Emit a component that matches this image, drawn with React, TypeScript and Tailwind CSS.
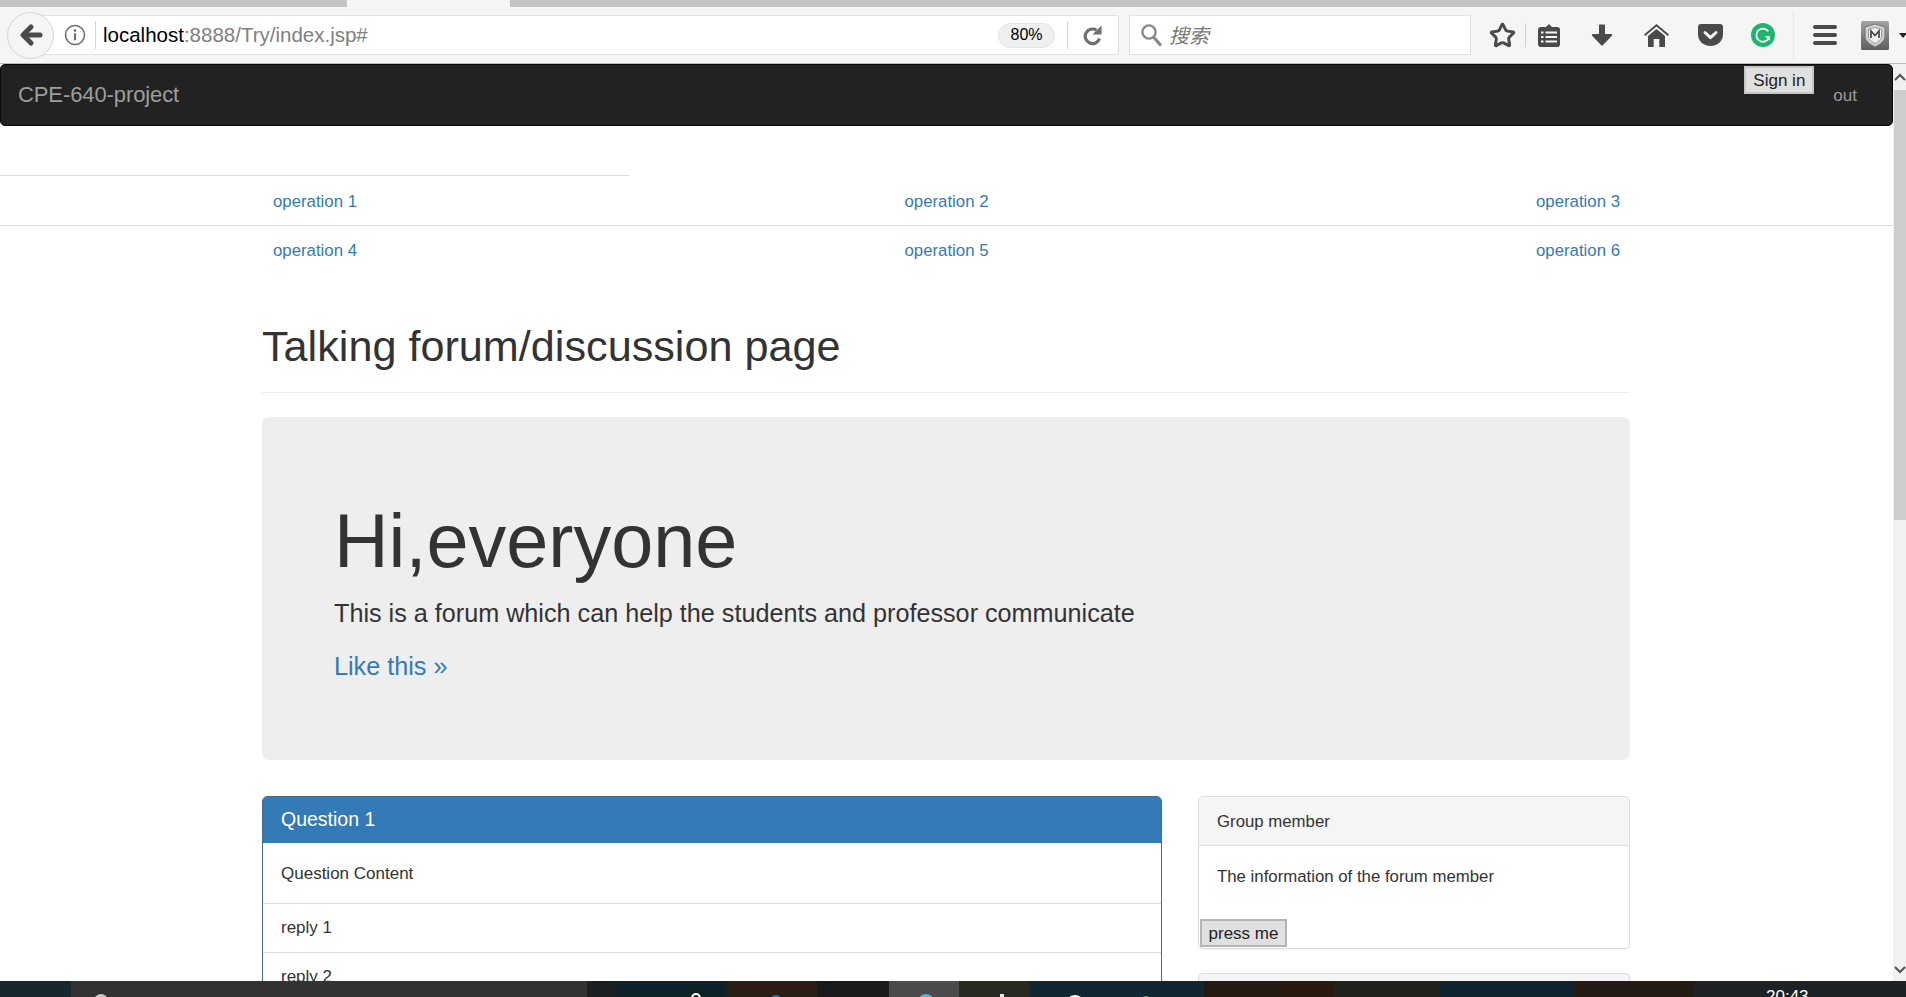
import { Star } from "lucide-react";

function BackIcon() {
  return (
    <svg width="24" height="24" viewBox="0 0 24 24" fill="none" stroke="#4a4a4a" strokeWidth="5" strokeLinecap="round" strokeLinejoin="round">
      <path d="M21 12H5" />
      <path d="M12 4l-8 8 8 8" />
    </svg>
  );
}

function InfoIcon() {
  return (
    <svg width="22" height="22" viewBox="0 0 22 22" fill="none">
      <circle cx="11" cy="11" r="9.5" stroke="#6f6f6f" strokeWidth="1.6" />
      <circle cx="11" cy="6.6" r="1.3" fill="#6f6f6f" />
      <rect x="9.9" y="9.3" width="2.2" height="7" fill="#6f6f6f" />
    </svg>
  );
}

function ReloadIcon() {
  return (
    <svg width="20" height="24" viewBox="0 0 20 24" fill="none">
      <path d="M13.500 7.200A7.300 7.300 0 1 0 16.500 15.500" stroke="#6f6f6f" strokeWidth="3.200" />
      <path d="M18.500 2.500v9h-9z" fill="#6f6f6f" />
    </svg>
  );
}

function SearchIcon() {
  return (
    <svg width="22" height="24" viewBox="0 0 22 24" fill="none" stroke="#8a8a8a">
      <circle cx="9" cy="9" r="6.600" strokeWidth="2.400" />
      <path d="M14 14.500l6 7" strokeWidth="3.200" strokeLinecap="round" />
    </svg>
  );
}

function ClipboardIcon() {
  return (
    <svg width="22" height="24" viewBox="0 0 22 24">
      <path d="M3 4h5l3-3 3 3h5a3 3 0 0 1 3 3v14a3 3 0 0 1-3 3H3a3 3 0 0 1-3-3V7a3 3 0 0 1 3-3z" fill="#4a4a4a" />
      <path d="M3 8.500h2.500v2H3zM3 13h2.500v2H3zM3 17.500h2.500v2H3zM7.500 8.500H19v2H7.500zM7.500 13H19v2H7.500zM7.500 17.500H19v2H7.500z" fill="#f5f5f5" />
    </svg>
  );
}

function DownloadIcon() {
  return (
    <svg width="22" height="22" viewBox="0 0 22 22">
      <path d="M8 1.500a1 1 0 0 1 1-1h4a1 1 0 0 1 1 1V10h6.200a1 1 0 0 1 .7 1.700L12 21a1.400 1.400 0 0 1-2 0L1.100 11.700A1 1 0 0 1 1.800 10H8z" fill="#4a4a4a" />
    </svg>
  );
}

function HomeIcon() {
  return (
    <svg width="25" height="23" viewBox="0 0 25 23">
      <path d="M12.500 0L25 10.500l-1.200 1.400L12.500 2.500 1.200 11.900 0 10.500z" fill="#4a4a4a" />
      <path d="M12.500 5L21 12v11h-5.700v-8H9.700v8H4V12z" fill="#4a4a4a" />
    </svg>
  );
}

function PocketIcon() {
  return (
    <svg width="25" height="22" viewBox="0 0 25 22">
      <path d="M3 0h19a3 3 0 0 1 3 3v7.500C25 17 19.500 22 12.500 22S0 17 0 10.500V3a3 3 0 0 1 3-3z" fill="#4a4a4a" />
      <path d="M7 8.500l5.500 5.200L18 8.500" fill="none" stroke="#f5f5f5" strokeWidth="3" strokeLinecap="round" strokeLinejoin="round" />
    </svg>
  );
}

function GrammarlyIcon() {
  return (
    <svg width="24" height="24" viewBox="0 0 24 24">
      <circle cx="12" cy="12" r="12" fill="#1fb56f" />
      <path d="M17.300 8.200A6.600 6.600 0 1 0 17.700 15.500" fill="none" stroke="#fff" strokeWidth="1.800" />
      <path d="M13.800 13.200h5v4.300z" fill="#fff" />
    </svg>
  );
}

function ShieldIcon() {
  return (
    <svg className="block shrink-0" width="28" height="29" viewBox="0 0 28 29">
      <defs>
        <linearGradient id="addonBg" x1="0" y1="0" x2="0" y2="1">
          <stop offset="0" stopColor="#a4a4a4" />
          <stop offset="1" stopColor="#5e5e5e" />
        </linearGradient>
      </defs>
      <rect width="28" height="29" rx="1.500" fill="url(#addonBg)" />
      <path d="M4 6l10-3 10 3v9c0 5-4.500 8-10 11C8.500 23 4 20 4 15z" fill="#cfcfcf" stroke="#777777" />
      <path d="M7.500 8.500L14 6.500l6.500 2v6.500c0 3.500-3 5.500-6.500 7.500-3.500-2-6.500-4-6.500-7.500z" fill="#f2f2f2" stroke="#8a8a8a" strokeWidth="0.800" />
      <path d="M10 17v-7l4 4.500 4-4.500v7" fill="none" stroke="#444444" strokeWidth="1.700" />
    </svg>
  );
}

function Toolbar() {
  return (
    <div className="flex h-[57px] shrink-0 items-center border-b border-[#bcbcbc] bg-[#f5f5f5] pl-[7px]">
      <div className="z-10 flex h-[47px] w-[47px] shrink-0 items-center justify-center rounded-full border border-[#d4d4d4] bg-[#f5f5f5]">
        <BackIcon />
      </div>
      <div className="-ml-[14px] flex h-[40px] w-[1079px] shrink-0 items-center rounded-r-[2px] border border-[#e3e3e3] bg-white pl-[23px]">
        <InfoIcon />
        <span className="ml-[9px] h-[28px] w-px bg-[#d4d4d4]" />
        <span className="ml-[7px] text-[20.500px] text-[#808080]">
          <span className="text-black">localhost</span>:8888/Try/index.jsp#
        </span>
        <span className="ml-auto flex h-[25px] w-[57px] items-center justify-center rounded-full border border-[#e3e3e3] bg-[#f0f0f0] text-[16px] text-black">
          80%
        </span>
        <span className="ml-[12px] h-[28px] w-px bg-[#d4d4d4]" />
        <span className="ml-[15px] mr-[15px]">
          <ReloadIcon />
        </span>
      </div>
      <div className="ml-[10px] flex h-[40px] w-[342px] shrink-0 items-center border border-[#e3e3e3] bg-white pl-[10px]">
        <SearchIcon />
        <span className="ml-[7px] font-['Noto_Sans_CJK_SC',sans-serif] text-[20px] italic text-[#777777]">搜索</span>
      </div>
      <div className="ml-[14px] flex w-[34px] shrink-0 justify-center">
        <Star size={27} strokeWidth={2.6} color="#4a4a4a" />
      </div>
      <span className="ml-[6px] h-[24px] w-px shrink-0 bg-[#cfcfcf]" />
      <div className="ml-[6px] flex w-[34px] shrink-0 justify-center"><ClipboardIcon /></div>
      <div className="ml-[19px] flex w-[34px] shrink-0 justify-center"><DownloadIcon /></div>
      <div className="ml-[20px] flex w-[34px] shrink-0 justify-center"><HomeIcon /></div>
      <div className="ml-[20px] flex w-[34px] shrink-0 justify-center"><PocketIcon /></div>
      <div className="ml-[19px] flex w-[34px] shrink-0 justify-center"><GrammarlyIcon /></div>
      <span className="ml-[13px] h-[48px] w-px shrink-0 bg-[#e6e6e6]" />
      <div className="ml-[14px] flex w-[34px] shrink-0 flex-col items-center gap-[3.500px]">
        <span className="h-[4.500px] w-[24px] rounded-full bg-[#4a4a4a]" />
        <span className="h-[4.500px] w-[24px] rounded-full bg-[#4a4a4a]" />
        <span className="h-[4.500px] w-[24px] rounded-full bg-[#4a4a4a]" />
      </div>
      <div className="ml-[19px] w-[28px] shrink-0"><ShieldIcon /></div>
      <span className="ml-[10px] h-0 w-0 shrink-0 border-x-[4px] border-t-[5px] border-x-transparent border-t-[#222222]" />
    </div>
  );
}

function Navbar() {
  return (
    <nav className="flex h-[62px] shrink-0 rounded-[5px] border border-[#080808] bg-[#222222] pl-[17px] pr-[35px]">
      <a className="-mt-[2px] self-center text-[22px] tracking-[-0.1px] text-[#9d9d9d]">CPE-640-project</a>
      <button className="ml-auto mt-px h-[28px] w-[70px] border-2 border-[#c6c6c6] bg-[#e0e0e0] text-[17px] leading-none text-[#222222]">
        Sign in
      </button>
      <a className="ml-[19px] mt-[18px] text-[17px] text-[#9d9d9d]">out</a>
    </nav>
  );
}

function OperationRow({ items, className }: { items: string[]; className?: string }) {
  return (
    <div className={`flex h-[49px] items-center pl-[273px] ${className ?? ""}`}>
      {items.map((item) => (
        <a key={item} className="w-[631.500px] shrink-0 text-[16.800px] text-[#337ab7]">{item}</a>
      ))}
    </div>
  );
}

function QuestionPanel() {
  return (
    <section className="w-[900px] shrink-0 rounded-[5px] border border-[#44688a]">
      <div className="flex h-[46px] items-center rounded-t-[4px] bg-[#337ab7] px-[18px] text-[19.500px] text-white">Question 1</div>
      <div className="flex h-[61px] items-center border-b border-[#dddddd] px-[18px] pt-px text-[17px]">Question Content</div>
      <div className="flex h-[49px] items-center border-b border-[#dddddd] px-[18px] text-[17px]">reply 1</div>
      <div className="flex h-[49px] items-center border-b border-[#dddddd] px-[18px] text-[17px]">reply 2</div>
    </section>
  );
}

function MemberPanel() {
  return (
    <div className="w-[432px] shrink-0">
      <section className="h-[153px] rounded-[5px] border border-[#dddddd] shadow-[0_1px_1px_rgba(0,0,0,0.05)]">
        <div className="flex h-[49px] items-center rounded-t-[4px] border-b border-[#dddddd] bg-[#f5f5f5] px-[18px] pt-px text-[16.800px]">Group member</div>
        <p className="px-[18px] pt-[20px] text-[16.800px] leading-[22px]">The information of the forum member</p>
        <button className="ml-px mt-[31px] block h-[28px] w-[87px] border-2 border-[#b4b4b4] bg-[#e0e0e0] text-[17px] leading-none text-[#222222]">
          press me
        </button>
      </section>
      <section className="mt-[24px] h-[60px] rounded-[5px] border border-[#dddddd] bg-[#f5f5f5]" />
    </div>
  );
}

function Scrollbar() {
  return (
    <div className="relative flex w-[13px] shrink-0 flex-col items-end bg-[#f1f1f1]">
      <svg className="mt-[8px]" width="12" height="10" viewBox="0 0 12 10" fill="none" stroke="#505050" strokeWidth="2">
        <path d="M1 8l5-5 5 5" />
      </svg>
      <div className="mt-[8px] h-[430px] w-[12px] bg-[#cdcdcd]" />
      <svg className="mt-auto mb-[6px]" width="12" height="10" viewBox="0 0 12 10" fill="none" stroke="#505050" strokeWidth="2">
        <path d="M1 2l5 5 5-5" />
      </svg>
    </div>
  );
}

function Taskbar() {
  return (
    <div className="relative flex h-[16px] shrink-0 overflow-hidden bg-[#1c1c1c]">
      <div className="w-[71px] bg-[#18262d]" />
      <div className="w-[516px] bg-[#333333]" />
      <div className="w-[30px] bg-[#1b1f22]" />
      <div className="w-[110px] bg-[#0e2129]" />
      <div className="w-[90px] bg-[#2a1e14]" />
      <div className="w-[72px] bg-[#1a1a1c]" />
      <div className="w-[70px] bg-[#4a4a48]" />
      <div className="w-[70px] bg-[#282a22]" />
      <div className="w-[175px] bg-[#11262f]" />
      <div className="w-[75px] bg-[#241a12]" />
      <div className="w-[55px] bg-[#2a1a0e]" />
      <div className="w-[105px] bg-[#22221c]" />
      <div className="w-[135px] bg-[#0f242e]" />
      <div className="w-[120px] bg-[#241c14]" />
      <div className="flex-1 bg-[#1e2226]" />
      <span className="absolute left-[94px] top-[13px] h-[20px] w-[14px] rounded-full bg-[#c8c8c8]" />
      <span className="absolute left-[691px] top-[12px] h-[20px] w-[10px] rounded-full border-2 border-white" />
      <span className="absolute left-[770px] top-[14px] h-[20px] w-[12px] rounded-full bg-[#0a7bd0]" />
      <span className="absolute left-[918px] top-[13px] h-[20px] w-[16px] rounded-full bg-[#4eb3e6]" />
      <span className="absolute left-[1000px] top-[13px] h-[20px] w-[4px] bg-[#e8e8e8]" />
      <span className="absolute left-[1066px] top-[14px] h-[20px] w-[18px] rounded-full bg-white" />
      <span className="absolute left-[1140px] top-[15px] h-[20px] w-[12px] rounded-full bg-[#6a9a3a]" />
      <span className="absolute left-[1766px] top-[6px] text-[17px] leading-[20px] text-white">20:43</span>
    </div>
  );
}

export default function App() {
  return (
    <div className="flex h-screen flex-col overflow-hidden bg-white font-['Liberation_Sans',Arial,sans-serif] text-[#333333]">
      <div className="flex h-[7px] shrink-0">
        <div className="w-[347px] bg-[#c4c4c4]" />
        <div className="w-[163px] bg-[#f5f5f5]" />
        <div className="flex-1 bg-[#c4c4c4]" />
      </div>
      <Toolbar />
      <div className="flex min-h-0 flex-1">
        <main className="min-w-0 flex-1 overflow-hidden">
          <Navbar />
          <div className="mt-[49px] w-[629px] border-t border-[#dddddd]" />
          <OperationRow items={["operation 1", "operation 2", "operation 3"]} className="pt-[2px]" />
          <div className="border-t border-[#dddddd]" />
          <OperationRow items={["operation 4", "operation 5", "operation 6"]} />
          <div className="ml-[262px] w-[1368px]">
            <h1 className="mt-[47px] border-b border-[#eeeeee] pb-[22px] text-[43.200px] leading-[48px]">
              Talking forum/discussion page
            </h1>
            <section className="mt-[24px] h-[343px] rounded-[7px] bg-[#eeeeee] px-[72px] pt-[74px]">
              <h2 className="text-[75.600px] leading-[100px]">Hi,everyone</h2>
              <p className="mt-[4px] text-[25.200px] leading-[36px]">This is a forum which can help the students and professor communicate</p>
              <a className="mt-[17px] block text-[25.200px] leading-[36px] text-[#337ab7]">Like this »</a>
            </section>
            <div className="mt-[36px] flex gap-[36px]">
              <QuestionPanel />
              <MemberPanel />
            </div>
          </div>
        </main>
        <Scrollbar />
      </div>
      <Taskbar />
    </div>
  );
}
